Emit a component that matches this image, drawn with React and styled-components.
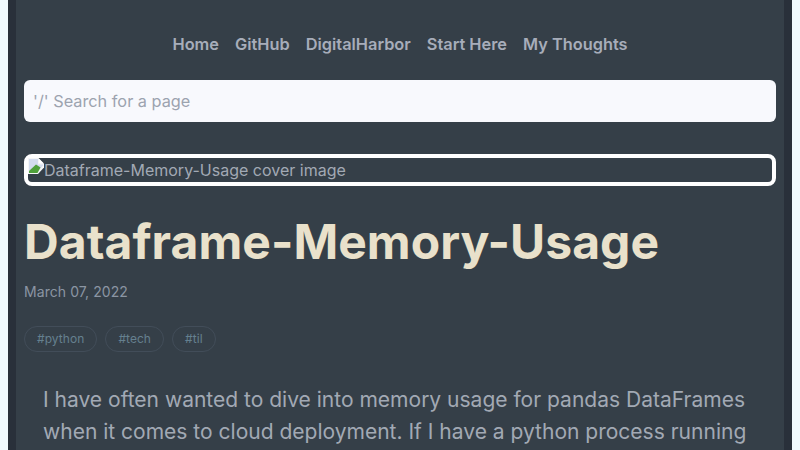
import React from 'react';
import styled, { createGlobalStyle } from 'styled-components';

const GlobalStyle = createGlobalStyle`
  html, body {
    margin: 0;
    height: 450px;
    overflow: hidden;
    background: #f0fafe;
  }
  * {
    box-sizing: border-box;
  }
`;

const Page = styled.div`
  margin: 0 8px;
  height: 450px;
  overflow: hidden;
  padding: 0 8px;
  background: #353f48;
  border-left: 8px solid #29303a;
  border-right: 8px solid #29303a;
  font-family: Inter, "Liberation Sans", sans-serif;
`;

const Nav = styled.nav`
  display: flex;
  justify-content: center;
  gap: 16px;
  padding-top: 34px;
  height: 80px;
`;

const NavLink = styled.a`
  font-size: 16.35px;
  font-weight: 600;
  line-height: 20px;
  color: #a7adba;
`;

const Search = styled.input`
  display: block;
  width: 100%;
  height: 42px;
  padding: 0 9px;
  border: none;
  border-radius: 6px;
  background: #f8f9fd;
  font-family: inherit;
  font-size: 16.3px;

  &::placeholder {
    color: #9ca3af;
    opacity: 1;
  }
`;

const Cover = styled.div`
  display: flex;
  align-items: center;
  height: 32px;
  margin-top: 32px;
  border: 4px solid #fff;
  border-radius: 8px;
  font-size: 16px;
  color: #a2a9b4;
  white-space: nowrap;
`;

const BrokenIcon = styled.svg`
  flex: none;
  align-self: flex-start;
  width: 16px;
  height: 16px;
`;

const Title = styled.h1`
  margin: 29px 0 0;
  font-size: 48px;
  line-height: 54px;
  font-weight: 700;
  letter-spacing: 0.05px;
  color: #e9e1cb;
`;

const Date = styled.p`
  margin: 13px 0 0;
  font-size: 14px;
  line-height: 20px;
  letter-spacing: 0.07px;
  color: #8b95a3;
`;

const Tags = styled.div`
  display: flex;
  gap: 8px;
  margin-top: 24px;
`;

const Tag = styled.span`
  padding: 0 12px;
  height: 26px;
  line-height: 24px;
  border: 1px solid #424d59;
  border-radius: 13px;
  font-size: 12px;
  letter-spacing: 0.06px;
  color: #65808f;
`;

const Body = styled.p`
  margin: 32px 0 0;
  padding: 0 19px;
  font-size: 21.03px;
  line-height: 32px;
  color: #a2a9b4;
  white-space: nowrap;
`;

const links = ['Home', 'GitHub', 'DigitalHarbor', 'Start Here', 'My Thoughts'];
const tags = ['#python', '#tech', '#til'];

export default function App() {
  return (
    <Page>
      <GlobalStyle />
      <Nav>
        {links.map((l) => (
          <NavLink key={l}>{l}</NavLink>
        ))}
      </Nav>
      <Search placeholder="'/' Search for a page" />
      <Cover>
        <BrokenIcon viewBox="0 0 16 16">
          <path d="M0 0H10.5L16 5.5V9.5L10 16H0Z" fill="#f4f5f6" />
          <path d="M1 1H10V6.5H15V7.5L9 14L6 11L1 13Z" fill="#d3dcee" />
          <path d="M1 15V13L8 6.5L12.5 9.5L9.5 15Z" fill="#4fa03a" />
          <path d="M11 1L15 5H11Z" fill="#ffffff" />
        </BrokenIcon>
        Dataframe-Memory-Usage cover image
      </Cover>
      <Title>Dataframe-Memory-Usage</Title>
      <Date>March 07, 2022</Date>
      <Tags>
        {tags.map((t) => (
          <Tag key={t}>{t}</Tag>
        ))}
      </Tags>
      <Body>
        I have often wanted to dive into memory usage for pandas DataFrames
        <br />
        when it comes to cloud deployment. If I have a python process running
      </Body>
    </Page>
  );
}
